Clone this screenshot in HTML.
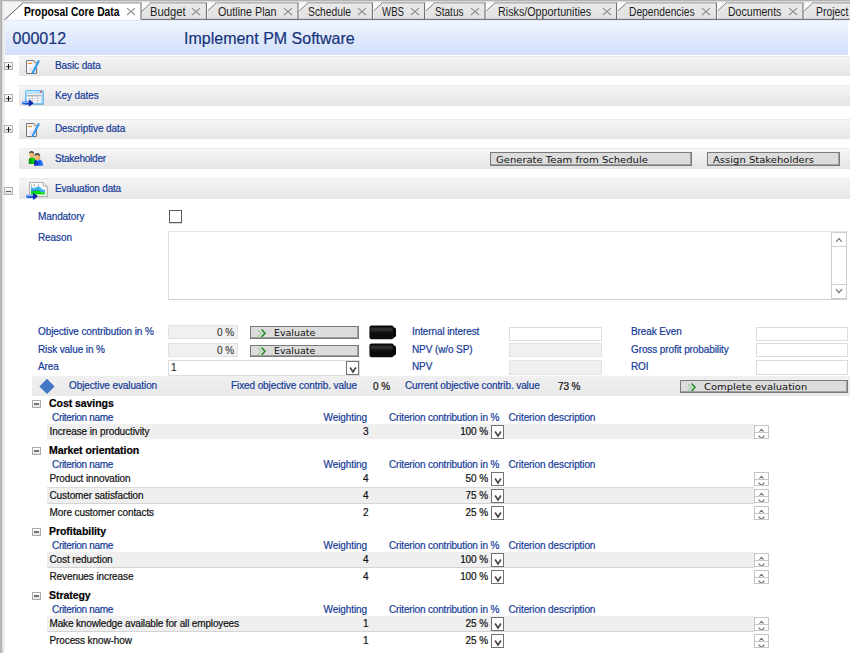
<!DOCTYPE html><html><head><meta charset="utf-8"><title>Proposal Core Data</title><style>
html,body{margin:0;padding:0}
body{width:850px;height:653px;overflow:hidden;background:#fff;position:relative;font-family:"Liberation Sans",sans-serif;font-size:10px;letter-spacing:-0.1px;color:#000;-webkit-text-stroke:0.2px}
.a{position:absolute;white-space:nowrap}
.lb{color:#153b98}
.t{position:absolute;white-space:nowrap;line-height:14px;height:14px}
.k{color:#111}
.sec{position:absolute;left:19px;width:831px;background:linear-gradient(#f5f5f5,#e5e5e5);border-top:1px solid #ebebeb;box-sizing:border-box}
.pm{position:absolute;left:4px;width:9px;height:8px;box-sizing:border-box;border:1px solid #b2b2b2;background:linear-gradient(#fff,#dedede)}
.pm i{position:absolute;left:1px;top:2.5px;width:5px;height:1px;background:#5a5a5a}
.pm b{position:absolute;left:3px;top:0.5px;width:1px;height:5px;background:#111}
.tabt{position:absolute;top:4px;line-height:16px;font-size:12px;letter-spacing:0;-webkit-text-stroke:0;white-space:nowrap;color:#1e1e1e}
.inp{position:absolute;box-sizing:border-box;border:1px solid #dcdcdc;background:#fff}
.ro{background:#f0f0f0;border-color:#e2e2e2}
.btn{position:absolute;box-sizing:border-box;border:1px solid #7a7a7a;background:#dcdcdc;font-family:"DejaVu Sans","Liberation Sans",sans-serif;font-size:8.6px;letter-spacing:0;-webkit-text-stroke:0;line-height:12px;white-space:nowrap;color:#111;box-shadow:inset -1px -1px 0 #a0a0a0}
.row{position:absolute;left:47px;width:707px;height:15px;background:#efefef}
.hl{position:absolute;left:47px;width:707px;height:1px;background:#dcdcdc}
.dd{position:absolute;width:13px;height:13px;box-sizing:border-box;border:1px solid #9a9a9a;background:#fff}
.sp{position:absolute;width:15px;height:14px;box-sizing:border-box;border:1px solid #c6c6c6;background:#fff;overflow:hidden}
</style></head><body>
<div class="a" style="left:0;top:0;width:850px;height:20px;background:#f3f3f3"></div>
<div class="a" style="left:0;top:0;width:850px;height:1px;background:#b2b2b2"></div>
<div class="a" style="left:0;top:1px;width:850px;height:1px;background:#dcdcdc"></div>
<div class="a" style="left:0;top:0;width:2px;height:653px;background:linear-gradient(90deg,#bcbcbc,#adadad)"></div>
<div class="a" style="left:2px;top:1px;width:3px;height:652px;background:linear-gradient(90deg,#dcdcdc,#f6f6f6)"></div>
<svg class="a" style="left:0;top:0" width="850" height="21" viewBox="0 0 850 21"><defs><linearGradient id="tg" x1="0" y1="0" x2="0" y2="1"><stop offset="0" stop-color="#e9e9e9"/><stop offset="1" stop-color="#e2e2e2"/></linearGradient></defs><path d="M803 3.6 L812.0 3.6 L803 11.83Z" fill="#fcfcfc"/><path d="M794.5 19 L812.0 3.2 L900 3.2 L900 19Z" fill="url(#tg)"/><rect x="812.0" y="2" width="38.0" height="1" fill="#b3b3b3"/><rect x="813.0" y="3" width="38.0" height="1" fill="#cbcbcb"/><rect x="900.5" y="10" width="0.9" height="9" fill="#f4f4f4"/><path d="M900 3 L900 19.5" fill="none" stroke="#686868"/><path d="M794.5 19.5 L812.6 3.3" fill="none" stroke="#6a6a6a" stroke-width="0.8"/><path d="M716.4 3.6 L725.4 3.6 L716.4 11.83Z" fill="#fcfcfc"/><path d="M707.9 19 L725.4 3.2 L803 3.2 L803 19Z" fill="url(#tg)"/><rect x="725.4" y="2" width="78.10000000000002" height="1" fill="#b3b3b3"/><rect x="726.4" y="3" width="77.10000000000002" height="1" fill="#cbcbcb"/><rect x="803.5" y="10" width="0.9" height="9" fill="#f4f4f4"/><path d="M803 3 L803 19.5" fill="none" stroke="#686868"/><path d="M707.9 19.5 L726.0 3.3" fill="none" stroke="#6a6a6a" stroke-width="0.8"/><path d="M616.6 3.6 L625.6 3.6 L616.6 11.83Z" fill="#fcfcfc"/><path d="M608.1 19 L625.6 3.2 L716.4 3.2 L716.4 19Z" fill="url(#tg)"/><rect x="625.6" y="2" width="91.29999999999995" height="1" fill="#b3b3b3"/><rect x="626.6" y="3" width="90.29999999999995" height="1" fill="#cbcbcb"/><rect x="716.9" y="10" width="0.9" height="9" fill="#f4f4f4"/><path d="M716.4 3 L716.4 19.5" fill="none" stroke="#686868"/><path d="M608.1 19.5 L626.2 3.3" fill="none" stroke="#6a6a6a" stroke-width="0.8"/><path d="M485 3.6 L494.0 3.6 L485 11.83Z" fill="#fcfcfc"/><path d="M476.5 19 L494.0 3.2 L616.6 3.2 L616.6 19Z" fill="url(#tg)"/><rect x="494.0" y="2" width="123.10000000000002" height="1" fill="#b3b3b3"/><rect x="495.0" y="3" width="122.10000000000002" height="1" fill="#cbcbcb"/><rect x="617.1" y="10" width="0.9" height="9" fill="#f4f4f4"/><path d="M616.6 3 L616.6 19.5" fill="none" stroke="#686868"/><path d="M476.5 19.5 L494.6 3.3" fill="none" stroke="#6a6a6a" stroke-width="0.8"/><path d="M424.6 3.6 L433.6 3.6 L424.6 11.83Z" fill="#fcfcfc"/><path d="M416.1 19 L433.6 3.2 L485 3.2 L485 19Z" fill="url(#tg)"/><rect x="433.6" y="2" width="51.89999999999998" height="1" fill="#b3b3b3"/><rect x="434.6" y="3" width="50.89999999999998" height="1" fill="#cbcbcb"/><rect x="485.5" y="10" width="0.9" height="9" fill="#f4f4f4"/><path d="M485 3 L485 19.5" fill="none" stroke="#686868"/><path d="M416.1 19.5 L434.20000000000005 3.3" fill="none" stroke="#6a6a6a" stroke-width="0.8"/><path d="M372.4 3.6 L381.4 3.6 L372.4 11.83Z" fill="#fcfcfc"/><path d="M363.9 19 L381.4 3.2 L424.6 3.2 L424.6 19Z" fill="url(#tg)"/><rect x="381.4" y="2" width="43.700000000000045" height="1" fill="#b3b3b3"/><rect x="382.4" y="3" width="42.700000000000045" height="1" fill="#cbcbcb"/><rect x="425.1" y="10" width="0.9" height="9" fill="#f4f4f4"/><path d="M424.6 3 L424.6 19.5" fill="none" stroke="#686868"/><path d="M363.9 19.5 L382.0 3.3" fill="none" stroke="#6a6a6a" stroke-width="0.8"/><path d="M298 3.6 L307.0 3.6 L298 11.83Z" fill="#fcfcfc"/><path d="M289.5 19 L307.0 3.2 L372.4 3.2 L372.4 19Z" fill="url(#tg)"/><rect x="307.0" y="2" width="65.89999999999998" height="1" fill="#b3b3b3"/><rect x="308.0" y="3" width="64.89999999999998" height="1" fill="#cbcbcb"/><rect x="372.9" y="10" width="0.9" height="9" fill="#f4f4f4"/><path d="M372.4 3 L372.4 19.5" fill="none" stroke="#686868"/><path d="M289.5 19.5 L307.6 3.3" fill="none" stroke="#6a6a6a" stroke-width="0.8"/><path d="M206.4 3.6 L215.4 3.6 L206.4 11.83Z" fill="#fcfcfc"/><path d="M197.9 19 L215.4 3.2 L298 3.2 L298 19Z" fill="url(#tg)"/><rect x="215.4" y="2" width="83.1" height="1" fill="#b3b3b3"/><rect x="216.4" y="3" width="82.1" height="1" fill="#cbcbcb"/><rect x="298.5" y="10" width="0.9" height="9" fill="#f4f4f4"/><path d="M298 3 L298 19.5" fill="none" stroke="#686868"/><path d="M197.9 19.5 L216.0 3.3" fill="none" stroke="#6a6a6a" stroke-width="0.8"/><path d="M141 3.6 L150.0 3.6 L141 11.83Z" fill="#fcfcfc"/><path d="M132.5 19 L150.0 3.2 L206.4 3.2 L206.4 19Z" fill="url(#tg)"/><rect x="150.0" y="2" width="56.900000000000006" height="1" fill="#b3b3b3"/><rect x="151.0" y="3" width="55.900000000000006" height="1" fill="#cbcbcb"/><rect x="206.9" y="10" width="0.9" height="9" fill="#f4f4f4"/><path d="M206.4 3 L206.4 19.5" fill="none" stroke="#686868"/><path d="M132.5 19.5 L150.6 3.3" fill="none" stroke="#6a6a6a" stroke-width="0.8"/><path d="M4.5 20.5 L22.0 3.2 L141 3.2 L141 20.5Z" fill="#fff"/><rect x="22.0" y="2" width="119.5" height="1" fill="#b3b3b3"/><rect x="23.0" y="3" width="118.5" height="1" fill="#d4d4d4"/><path d="M141 3 L141 19.8" fill="none" stroke="#686868"/><path d="M4.5 19.8 L22.6 3.3" fill="none" stroke="#4a4a4a" stroke-width="0.9"/><rect x="141.5" y="18.85" width="709" height="1" fill="#626262"/></svg>
<div class="tabt" style="left:24px;transform:scaleX(0.8575);transform-origin:0 0;font-weight:bold;color:#000;">Proposal Core Data</div>
<svg class="a" style="left:126px;top:7px" width="10" height="9" viewBox="0 0 10 9"><path d="M1 1.2 L9 8 M9 1.2 L1 8" stroke="#8e8e8e" stroke-width="1.1" fill="none"/></svg>
<div class="tabt" style="left:150px;transform:scaleX(0.9331);transform-origin:0 0;">Budget</div>
<svg class="a" style="left:191.4px;top:7px" width="10" height="9" viewBox="0 0 10 9"><path d="M1 1.2 L9 8 M9 1.2 L1 8" stroke="#8e8e8e" stroke-width="1.1" fill="none"/></svg>
<div class="tabt" style="left:218px;transform:scaleX(0.8948);transform-origin:0 0;">Outline Plan</div>
<svg class="a" style="left:283px;top:7px" width="10" height="9" viewBox="0 0 10 9"><path d="M1 1.2 L9 8 M9 1.2 L1 8" stroke="#8e8e8e" stroke-width="1.1" fill="none"/></svg>
<div class="tabt" style="left:308px;transform:scaleX(0.8592);transform-origin:0 0;">Schedule</div>
<svg class="a" style="left:357.4px;top:7px" width="10" height="9" viewBox="0 0 10 9"><path d="M1 1.2 L9 8 M9 1.2 L1 8" stroke="#8e8e8e" stroke-width="1.1" fill="none"/></svg>
<div class="tabt" style="left:382.4px;transform:scaleX(0.8082);transform-origin:0 0;">WBS</div>
<svg class="a" style="left:409.6px;top:7px" width="10" height="9" viewBox="0 0 10 9"><path d="M1 1.2 L9 8 M9 1.2 L1 8" stroke="#8e8e8e" stroke-width="1.1" fill="none"/></svg>
<div class="tabt" style="left:435px;transform:scaleX(0.8375);transform-origin:0 0;">Status</div>
<svg class="a" style="left:470px;top:7px" width="10" height="9" viewBox="0 0 10 9"><path d="M1 1.2 L9 8 M9 1.2 L1 8" stroke="#8e8e8e" stroke-width="1.1" fill="none"/></svg>
<div class="tabt" style="left:498.4px;transform:scaleX(0.8958);transform-origin:0 0;">Risks/Opportunities</div>
<svg class="a" style="left:601.6px;top:7px" width="10" height="9" viewBox="0 0 10 9"><path d="M1 1.2 L9 8 M9 1.2 L1 8" stroke="#8e8e8e" stroke-width="1.1" fill="none"/></svg>
<div class="tabt" style="left:629px;transform:scaleX(0.8549);transform-origin:0 0;">Dependencies</div>
<svg class="a" style="left:701.4px;top:7px" width="10" height="9" viewBox="0 0 10 9"><path d="M1 1.2 L9 8 M9 1.2 L1 8" stroke="#8e8e8e" stroke-width="1.1" fill="none"/></svg>
<div class="tabt" style="left:727.6px;transform:scaleX(0.8797);transform-origin:0 0;">Documents</div>
<svg class="a" style="left:788px;top:7px" width="10" height="9" viewBox="0 0 10 9"><path d="M1 1.2 L9 8 M9 1.2 L1 8" stroke="#8e8e8e" stroke-width="1.1" fill="none"/></svg>
<div class="tabt" style="left:815.7px;transform:scaleX(0.8646);transform-origin:0 0;">Project</div>
<div class="a" style="left:5px;top:20px;width:843px;height:35px;background:linear-gradient(#f1f5fe,#d1dffc)"></div>
<div class="a" style="left:5px;top:20px;width:843px;height:1px;background:#dfe9fc"></div>
<div class="a" style="left:12.5px;top:29px;font-size:16px;letter-spacing:0.05px;line-height:20px;color:#17357a">000012</div>
<div class="a" style="left:184px;top:29px;font-size:16px;letter-spacing:0;line-height:20px;color:#17357a">Implement PM Software</div>
<div class="sec" style="top:56px;height:20px"></div>
<div class="pm" style="top:62px"><i></i><b></b></div>
<div class="t lb" style="left:55px;top:59px;letter-spacing:-0.1px">Basic data</div>
<div class="sec" style="top:85px;height:21px"></div>
<div class="pm" style="top:94px"><i></i><b></b></div>
<div class="t lb" style="left:55px;top:89px;letter-spacing:-0.1px">Key dates</div>
<div class="sec" style="top:119px;height:20px"></div>
<div class="pm" style="top:125px"><i></i><b></b></div>
<div class="t lb" style="left:55px;top:122px;letter-spacing:-0.1px">Descriptive data</div>
<div class="sec" style="top:148px;height:21px"></div>
<div class="t lb" style="left:55px;top:152px;letter-spacing:-0.23px">Stakeholder</div>
<div class="sec" style="top:178px;height:21px"></div>
<div class="pm" style="top:187px"><i></i></div>
<div class="t lb" style="left:55px;top:182px;letter-spacing:-0.2px">Evaluation data</div>
<svg class="a" style="left:0;top:50px" width="60" height="160" viewBox="0 50 60 160"><defs>
<linearGradient id="docg" x1="0" y1="0" x2="1" y2="1"><stop offset="0" stop-color="#ffffff"/><stop offset="1" stop-color="#e9e9f4"/></linearGradient>
<linearGradient id="arw" x1="0" y1="0" x2="1" y2="0"><stop offset="0" stop-color="#2a6af0"/><stop offset="0.55" stop-color="#1440d0"/><stop offset="1" stop-color="#06107a"/></linearGradient>
<linearGradient id="calh" x1="0" y1="0" x2="0" y2="1"><stop offset="0" stop-color="#c6e8fe"/><stop offset="1" stop-color="#86ccfb"/></linearGradient>
<linearGradient id="grn" x1="0" y1="0" x2="1" y2="0"><stop offset="0" stop-color="#0a8a0a"/><stop offset="0.7" stop-color="#0ccf0c"/><stop offset="1" stop-color="#0aa00a"/></linearGradient>
<linearGradient id="blu" x1="0" y1="0" x2="1" y2="0"><stop offset="0" stop-color="#0a1f9a"/><stop offset="0.45" stop-color="#0f49e6"/><stop offset="1" stop-color="#3f8ef6"/></linearGradient>
<linearGradient id="face" x1="0" y1="0" x2="1" y2="1"><stop offset="0" stop-color="#ffd9a0"/><stop offset="1" stop-color="#f09a40"/></linearGradient>
</defs><g transform="translate(26,60)"><path d="M0.5 0.5 H8 L10.5 3 V13.5 H0.5Z" fill="url(#docg)" stroke="#747474"/><path d="M8 0.8 V3 H10.2" fill="none" stroke="#a0a0a0" stroke-width="0.7"/><rect x="1.8" y="2.8" width="4.2" height="1.3" rx="0.4" fill="#f7941d"/><rect x="3" y="8" width="3.2" height="0.8" fill="#d4d4dc"/><rect x="3" y="10.2" width="3.2" height="0.8" fill="#d4d4dc"/><path d="M12.6 1.2 L6.7 12.7" stroke="#2f97e8" stroke-width="2.3" stroke-linecap="round"/><path d="M12.4 1.6 L6.9 12.4" stroke="#7cc4f6" stroke-width="0.8" stroke-dasharray="1 1.1"/></g><g transform="translate(25,90)"><rect x="0.8" y="0.8" width="18.2" height="14.2" fill="#8a8a8a" opacity="0.6"/><rect x="0.5" y="0.5" width="17.6" height="13.6" rx="0.8" fill="url(#calh)" stroke="#62bbf8"/><rect x="2" y="4.3" width="14.4" height="8.6" fill="#ffffff"/><rect x="2" y="5.2" width="14.4" height="1.2" fill="#9c9c9c"/><path d="M7.5 4.5V12.9M12.5 4.5V12.9M2 8.6H16.4M2 11H16.4" stroke="#c4c4c4" stroke-width="0.7"/><rect x="12.3" y="1.3" width="2.2" height="1.2" fill="#c8ccd4"/><rect x="14.8" y="1.2" width="2.2" height="1.4" rx="0.5" fill="#e8353a"/></g><g transform="translate(21.8,98.8)"><path d="M1.2 2.6 H7 V0.3 L11.8 4.2 L7 8.2 V5.8 H1.2 Q0 5.6 0 4.2 Q0 2.8 1.2 2.6Z" fill="url(#arw)"/><path d="M1.2 3.6 H6.5" stroke="#9ad0ff" stroke-width="1" stroke-linecap="round"/></g><g transform="translate(26,123)"><path d="M0.5 0.5 H8 L10.5 3 V13.5 H0.5Z" fill="url(#docg)" stroke="#747474"/><path d="M8 0.8 V3 H10.2" fill="none" stroke="#a0a0a0" stroke-width="0.7"/><rect x="1.8" y="2.8" width="4.2" height="1.3" rx="0.4" fill="#f7941d"/><rect x="3" y="8" width="3.2" height="0.8" fill="#d4d4dc"/><rect x="3" y="10.2" width="3.2" height="0.8" fill="#d4d4dc"/><path d="M12.6 1.2 L6.7 12.7" stroke="#2f97e8" stroke-width="2.3" stroke-linecap="round"/><path d="M12.4 1.6 L6.9 12.4" stroke="#7cc4f6" stroke-width="0.8" stroke-dasharray="1 1.1"/></g><g><path d="M28.8 164 V160 Q29 157.2 32 157.2 Q35.4 157.2 35.4 160 V164Z" fill="url(#grn)"/><ellipse cx="31.6" cy="154.4" rx="2.5" ry="3.1" fill="url(#face)"/><path d="M29 154 Q28.9 151 31.6 151 Q34.3 151 34.3 154.6 Q33.6 152.6 31.6 152.7 Q29.8 152.7 29 154Z" fill="#4a4a4a"/><path d="M34.2 165.8 V162 Q34.6 159.2 38.4 159.2 Q43.2 159.6 43.3 165.8Z" fill="url(#blu)"/><path d="M36 159.6 L37.6 161.6 L39.6 159.6Z" fill="#6ab4fa"/><ellipse cx="37.3" cy="156.8" rx="2.8" ry="3.4" fill="url(#face)"/><path d="M34.4 156.6 Q34.3 153 37.3 153 Q40.3 153 40.2 157 Q39.4 154.9 37.3 155 Q35.4 155 34.4 156.6Z" fill="#4a4a4a"/></g><g transform="translate(29,182)"><path d="M1 1 H14.5 L19 5 V15.2 H1Z" fill="#9a9a9a" opacity="0.55"/><path d="M0.5 0.5 H14 L18.2 4.2 V14.4 H0.5Z" fill="#fbfbfb" stroke="#b0b0b0"/><path d="M14 0.5 V4.2 H18.2" fill="#e4e4e4" stroke="#b0b0b0" stroke-width="0.8"/><path d="M2.3 2.5V5M5.3 2.2V4.6M9.5 2.4V4.4" stroke="#777" stroke-width="0.6"/><path d="M2 5 L3.5 5.6 L5.5 6.2 L7.5 5 L9.5 4.2 L11.5 5.5 L13.5 7.2 L16 8 V10 H2Z" fill="#3fb4f2"/><path d="M2 8.2 L5 8.4 L8 7.6 L10 8 L12 9.6 L14 10 L16 9.4 V10.4 L13 10.6 L10 8.8 L8 8.4 L5 9.2 L2 9Z" fill="#2a6cc8"/><path d="M2 9 L5 9.2 L8 8.4 L10 8.8 L13 10.6 L16 10.4 V12.6 H2Z" fill="#08de08"/></g><g transform="translate(26.1,192.1)"><path d="M1.2 2.6 H7 V0.3 L11.8 4.2 L7 8.2 V5.8 H1.2 Q0 5.6 0 4.2 Q0 2.8 1.2 2.6Z" fill="url(#arw)"/><path d="M1.2 3.6 H6.5" stroke="#9ad0ff" stroke-width="1" stroke-linecap="round"/></g></svg>
<div class="btn" style="left:490px;top:152px;width:202px;height:14px"><span class="a" style="left:4.5px;top:0.5px;transform:scaleX(1.163);transform-origin:0 0">Generate Team from Schedule</span></div>
<div class="btn" style="left:707px;top:152px;width:133px;height:14px"><span class="a" style="left:4.5px;top:0.5px;transform:scaleX(1.165);transform-origin:0 0">Assign Stakeholders</span></div>
<div class="t lb" style="left:38px;top:210px;">Mandatory</div>
<div class="a" style="left:169px;top:210px;width:13px;height:13px;box-sizing:border-box;border:1px solid #5c5c5c;background:#fff;box-shadow:0 1px 0 #d8d8d8"></div>
<div class="t lb" style="left:38px;top:231px;">Reason</div>
<div class="inp" style="left:168px;top:231px;width:679px;height:69px;border-color:#e4e4e4 #dcdcdc #cfcfcf #dcdcdc"></div>
<div class="a" style="left:831px;top:232px;width:16px;height:67px;box-sizing:border-box;border:1px solid #cfcfcf;background:#fff"></div>
<div class="a" style="left:831px;top:246px;width:16px;height:1px;background:#cfcfcf"></div>
<div class="a" style="left:831px;top:284px;width:16px;height:1px;background:#cfcfcf"></div>
<svg class="a" style="left:831px;top:232px" width="16" height="15"><path d="M5 10 L8 6.6 L11 10" stroke="#6a6a6a" stroke-width="1.1" fill="none"/></svg>
<svg class="a" style="left:831px;top:284px" width="16" height="15"><path d="M5 5.2 L8 8.6 L11 5.2" stroke="#6a6a6a" stroke-width="1.1" fill="none"/></svg>
<div class="t lb" style="left:38px;top:325px;">Objective contribution in %</div>
<div class="t lb" style="left:412px;top:325px;">Internal interest</div>
<div class="t lb" style="left:631px;top:325px;">Break Even</div>
<div class="t lb" style="left:38px;top:343px;">Risk value in %</div>
<div class="t lb" style="left:412px;top:343px;">NPV (w/o SP)</div>
<div class="t lb" style="left:631px;top:343px;">Gross profit probability</div>
<div class="t lb" style="left:38px;top:360px;">Area</div>
<div class="t lb" style="left:412px;top:360px;">NPV</div>
<div class="t lb" style="left:631px;top:360px;">ROI</div>
<div class="inp ro" style="left:168px;top:325px;width:70px;height:14px"></div>
<div class="t k" style="left:114px;width:120px;text-align:right;top:326px;color:#333;-webkit-text-stroke:0.1px">0 %</div>
<div class="btn" style="left:250px;top:326px;width:109px;height:13px"><svg class="a" style="left:5.5px;top:1.5px" width="11" height="9" viewBox="0 0 11 9"><path d="M1 0.8 L4 4.3 L1 7.8" stroke="#9fd09f" stroke-width="1.1" fill="none"/><path d="M4.6 0.5 L8 4.3 L4.6 8.1" stroke="#1d8a1d" stroke-width="1.5" fill="none"/></svg><span class="a" style="left:22.5px;top:0px;transform:scaleX(1.1);transform-origin:0 0">Evaluate</span></div>
<svg class="a" style="left:368px;top:325px" width="30" height="15" viewBox="0 0 30 15"><rect x="23" y="2.6" width="5" height="9.8" rx="1.8" fill="#050505"/><rect x="1.4" y="0.6" width="24.4" height="13.6" rx="2.2" fill="#0b0b0b"/><rect x="2.6" y="2.6" width="22" height="4.6" rx="1" fill="#2d2d2d"/><rect x="2.6" y="6" width="22" height="2.4" fill="#161616"/></svg>
<div class="inp ro" style="left:168px;top:343px;width:70px;height:14px"></div>
<div class="t k" style="left:114px;width:120px;text-align:right;top:344px;color:#333;-webkit-text-stroke:0.1px">0 %</div>
<div class="btn" style="left:250px;top:345px;width:109px;height:12px"><svg class="a" style="left:5.5px;top:0.5px" width="11" height="9" viewBox="0 0 11 9"><path d="M1 0.8 L4 4.3 L1 7.8" stroke="#9fd09f" stroke-width="1.1" fill="none"/><path d="M4.6 0.5 L8 4.3 L4.6 8.1" stroke="#1d8a1d" stroke-width="1.5" fill="none"/></svg><span class="a" style="left:22.5px;top:-1px;transform:scaleX(1.1);transform-origin:0 0">Evaluate</span></div>
<svg class="a" style="left:368px;top:343px" width="30" height="15" viewBox="0 0 30 15"><rect x="23" y="2.6" width="5" height="9.8" rx="1.8" fill="#050505"/><rect x="1.4" y="0.6" width="24.4" height="13.6" rx="2.2" fill="#0b0b0b"/><rect x="2.6" y="2.6" width="22" height="4.6" rx="1" fill="#2d2d2d"/><rect x="2.6" y="6" width="22" height="2.4" fill="#161616"/></svg>
<div class="inp" style="left:168px;top:360px;width:192px;height:16px"></div>
<div class="t k" style="left:171px;top:361px;color:#222;-webkit-text-stroke:0.1px">1</div>
<div class="dd" style="left:346px;top:361px;height:14px;border-color:#727272"></div><svg class="a" style="left:346px;top:361px" width="13" height="14"><path d="M4.1 6.5 L7 10.9 L9.9 6.5" stroke="#484848" stroke-width="1.7" fill="none"/></svg>
<div class="inp" style="left:509px;top:327px;width:93px;height:14px"></div>
<div class="inp ro" style="left:509px;top:343px;width:93px;height:14px"></div>
<div class="inp ro" style="left:509px;top:360px;width:93px;height:15px"></div>
<div class="inp" style="left:756px;top:327px;width:92px;height:14px"></div>
<div class="inp" style="left:756px;top:343px;width:92px;height:14px"></div>
<div class="inp" style="left:756px;top:360px;width:92px;height:15px"></div>
<div class="a" style="left:32px;top:376px;width:818px;height:20px;background:linear-gradient(#f0f0f0,#e9e9e9)"></div>
<svg class="a" style="left:39px;top:378px" width="16" height="17" viewBox="0 0 16 17"><path d="M8 0.8 L15.6 8.4 L8 16 L0.4 8.4 Z" fill="#4177c4"/></svg>
<div class="t lb" style="left:69px;top:379px;">Objective evaluation</div>
<div class="t lb" style="left:231px;top:379px;">Fixed objective contrib. value</div>
<div class="t k" style="left:373px;top:380px;">0 %</div>
<div class="t lb" style="left:405px;top:379px;">Current objective contrib. value</div>
<div class="t k" style="left:558px;top:380px;">73 %</div>
<div class="btn" style="left:680px;top:380px;width:168px;height:13px"><svg class="a" style="left:5.5px;top:1.5px" width="11" height="9" viewBox="0 0 11 9"><path d="M1 0.8 L4 4.3 L1 7.8" stroke="#9fd09f" stroke-width="1.1" fill="none"/><path d="M4.6 0.5 L8 4.3 L4.6 8.1" stroke="#1d8a1d" stroke-width="1.5" fill="none"/></svg><span class="a" style="left:22.5px;top:0px;transform:scaleX(1.155);transform-origin:0 0">Complete evaluation</span></div>
<div class="a" style="left:32px;top:400px;width:9px;height:8px;box-sizing:border-box;border:1px solid #ababab;background:linear-gradient(#fff,#e2e2e2)"><i style="position:absolute;left:1px;top:2.3px;width:5px;height:1.5px;background:#747474"></i></div>
<div class="t k" style="left:49px;top:396px;font-weight:bold;font-size:10.5px;letter-spacing:-0.05px;color:#000">Cost savings</div>
<div class="t lb" style="left:52px;top:411px;letter-spacing:-0.33px">Criterion name</div>
<div class="t lb" style="left:247px;width:120px;text-align:right;top:411px;">Weighting</div>
<div class="t lb" style="left:389px;top:411px;letter-spacing:-0.16px">Criterion contribution in %</div>
<div class="t lb" style="left:508.5px;top:411px;">Criterion description</div>
<div class="row" style="top:424px"></div>
<div class="t k" style="left:49.5px;top:425px;">Increase in productivity</div>
<div class="t k" style="left:248.5px;width:120px;text-align:right;top:425px;">3</div>
<div class="t k" style="left:368px;width:120px;text-align:right;top:425px;">100 %</div>
<div class="dd" style="left:491px;top:425px;height:14px;border-color:#727272"></div><svg class="a" style="left:491px;top:425px" width="13" height="14"><path d="M4.1 6.5 L7 10.9 L9.9 6.5" stroke="#484848" stroke-width="1.7" fill="none"/></svg>
<div class="sp" style="left:754px;top:425px"><svg class="a" style="left:-1px;top:-1px" width="15" height="14"><path d="M0 7.5 H15" stroke="#c6c6c6"/><path d="M5.4 6.6 L7.5 4.4 L9.6 6.6" stroke="#777" stroke-width="1.1" fill="none"/><path d="M4.6 10.6 L7.5 13.6 L10.4 10.6" stroke="#666" stroke-width="1.1" fill="none"/></svg></div>
<div class="a" style="left:32px;top:447px;width:9px;height:8px;box-sizing:border-box;border:1px solid #ababab;background:linear-gradient(#fff,#e2e2e2)"><i style="position:absolute;left:1px;top:2.3px;width:5px;height:1.5px;background:#747474"></i></div>
<div class="t k" style="left:49px;top:443px;font-weight:bold;font-size:10.5px;letter-spacing:-0.05px;color:#000">Market orientation</div>
<div class="t lb" style="left:52px;top:458px;letter-spacing:-0.33px">Criterion name</div>
<div class="t lb" style="left:247px;width:120px;text-align:right;top:458px;">Weighting</div>
<div class="t lb" style="left:389px;top:458px;letter-spacing:-0.16px">Criterion contribution in %</div>
<div class="t lb" style="left:508.5px;top:458px;">Criterion description</div>
<div class="t k" style="left:49.5px;top:472px;">Product innovation</div>
<div class="t k" style="left:248.5px;width:120px;text-align:right;top:472px;">4</div>
<div class="t k" style="left:368px;width:120px;text-align:right;top:472px;">50 %</div>
<div class="dd" style="left:491px;top:472px;height:14px;border-color:#727272"></div><svg class="a" style="left:491px;top:472px" width="13" height="14"><path d="M4.1 6.5 L7 10.9 L9.9 6.5" stroke="#484848" stroke-width="1.7" fill="none"/></svg>
<div class="sp" style="left:754px;top:472px"><svg class="a" style="left:-1px;top:-1px" width="15" height="14"><path d="M0 7.5 H15" stroke="#c6c6c6"/><path d="M5.4 6.6 L7.5 4.4 L9.6 6.6" stroke="#777" stroke-width="1.1" fill="none"/><path d="M4.6 10.6 L7.5 13.6 L10.4 10.6" stroke="#666" stroke-width="1.1" fill="none"/></svg></div>
<div class="row" style="top:488px"></div>
<div class="hl" style="top:487px"></div>
<div class="hl" style="top:503px;background:#d4d4d4"></div>
<div class="t k" style="left:49.5px;top:489px;">Customer satisfaction</div>
<div class="t k" style="left:248.5px;width:120px;text-align:right;top:489px;">4</div>
<div class="t k" style="left:368px;width:120px;text-align:right;top:489px;">75 %</div>
<div class="dd" style="left:491px;top:489px;height:14px;border-color:#727272"></div><svg class="a" style="left:491px;top:489px" width="13" height="14"><path d="M4.1 6.5 L7 10.9 L9.9 6.5" stroke="#484848" stroke-width="1.7" fill="none"/></svg>
<div class="sp" style="left:754px;top:489px"><svg class="a" style="left:-1px;top:-1px" width="15" height="14"><path d="M0 7.5 H15" stroke="#c6c6c6"/><path d="M5.4 6.6 L7.5 4.4 L9.6 6.6" stroke="#777" stroke-width="1.1" fill="none"/><path d="M4.6 10.6 L7.5 13.6 L10.4 10.6" stroke="#666" stroke-width="1.1" fill="none"/></svg></div>
<div class="t k" style="left:49.5px;top:506px;">More customer contacts</div>
<div class="t k" style="left:248.5px;width:120px;text-align:right;top:506px;">2</div>
<div class="t k" style="left:368px;width:120px;text-align:right;top:506px;">25 %</div>
<div class="dd" style="left:491px;top:506px;height:14px;border-color:#727272"></div><svg class="a" style="left:491px;top:506px" width="13" height="14"><path d="M4.1 6.5 L7 10.9 L9.9 6.5" stroke="#484848" stroke-width="1.7" fill="none"/></svg>
<div class="sp" style="left:754px;top:506px"><svg class="a" style="left:-1px;top:-1px" width="15" height="14"><path d="M0 7.5 H15" stroke="#c6c6c6"/><path d="M5.4 6.6 L7.5 4.4 L9.6 6.6" stroke="#777" stroke-width="1.1" fill="none"/><path d="M4.6 10.6 L7.5 13.6 L10.4 10.6" stroke="#666" stroke-width="1.1" fill="none"/></svg></div>
<div class="a" style="left:32px;top:528px;width:9px;height:8px;box-sizing:border-box;border:1px solid #ababab;background:linear-gradient(#fff,#e2e2e2)"><i style="position:absolute;left:1px;top:2.3px;width:5px;height:1.5px;background:#747474"></i></div>
<div class="t k" style="left:49px;top:524px;font-weight:bold;font-size:10.5px;letter-spacing:-0.05px;color:#000">Profitability</div>
<div class="t lb" style="left:52px;top:539px;letter-spacing:-0.33px">Criterion name</div>
<div class="t lb" style="left:247px;width:120px;text-align:right;top:539px;">Weighting</div>
<div class="t lb" style="left:389px;top:539px;letter-spacing:-0.16px">Criterion contribution in %</div>
<div class="t lb" style="left:508.5px;top:539px;">Criterion description</div>
<div class="row" style="top:552px"></div>
<div class="hl" style="top:567px;background:#d4d4d4"></div>
<div class="t k" style="left:49.5px;top:553px;">Cost reduction</div>
<div class="t k" style="left:248.5px;width:120px;text-align:right;top:553px;">4</div>
<div class="t k" style="left:368px;width:120px;text-align:right;top:553px;">100 %</div>
<div class="dd" style="left:491px;top:553px;height:14px;border-color:#727272"></div><svg class="a" style="left:491px;top:553px" width="13" height="14"><path d="M4.1 6.5 L7 10.9 L9.9 6.5" stroke="#484848" stroke-width="1.7" fill="none"/></svg>
<div class="sp" style="left:754px;top:553px"><svg class="a" style="left:-1px;top:-1px" width="15" height="14"><path d="M0 7.5 H15" stroke="#c6c6c6"/><path d="M5.4 6.6 L7.5 4.4 L9.6 6.6" stroke="#777" stroke-width="1.1" fill="none"/><path d="M4.6 10.6 L7.5 13.6 L10.4 10.6" stroke="#666" stroke-width="1.1" fill="none"/></svg></div>
<div class="t k" style="left:49.5px;top:570px;">Revenues increase</div>
<div class="t k" style="left:248.5px;width:120px;text-align:right;top:570px;">4</div>
<div class="t k" style="left:368px;width:120px;text-align:right;top:570px;">100 %</div>
<div class="dd" style="left:491px;top:570px;height:14px;border-color:#727272"></div><svg class="a" style="left:491px;top:570px" width="13" height="14"><path d="M4.1 6.5 L7 10.9 L9.9 6.5" stroke="#484848" stroke-width="1.7" fill="none"/></svg>
<div class="sp" style="left:754px;top:570px"><svg class="a" style="left:-1px;top:-1px" width="15" height="14"><path d="M0 7.5 H15" stroke="#c6c6c6"/><path d="M5.4 6.6 L7.5 4.4 L9.6 6.6" stroke="#777" stroke-width="1.1" fill="none"/><path d="M4.6 10.6 L7.5 13.6 L10.4 10.6" stroke="#666" stroke-width="1.1" fill="none"/></svg></div>
<div class="a" style="left:32px;top:592px;width:9px;height:8px;box-sizing:border-box;border:1px solid #ababab;background:linear-gradient(#fff,#e2e2e2)"><i style="position:absolute;left:1px;top:2.3px;width:5px;height:1.5px;background:#747474"></i></div>
<div class="t k" style="left:49px;top:588px;font-weight:bold;font-size:10.5px;letter-spacing:-0.05px;color:#000">Strategy</div>
<div class="t lb" style="left:52px;top:603px;letter-spacing:-0.33px">Criterion name</div>
<div class="t lb" style="left:247px;width:120px;text-align:right;top:603px;">Weighting</div>
<div class="t lb" style="left:389px;top:603px;letter-spacing:-0.16px">Criterion contribution in %</div>
<div class="t lb" style="left:508.5px;top:603px;">Criterion description</div>
<div class="row" style="top:616px"></div>
<div class="hl" style="top:631px;background:#d4d4d4"></div>
<div class="t k" style="left:49.5px;top:617px;letter-spacing:-0.15px">Make knowledge available for all employees</div>
<div class="t k" style="left:248.5px;width:120px;text-align:right;top:617px;">1</div>
<div class="t k" style="left:368px;width:120px;text-align:right;top:617px;">25 %</div>
<div class="dd" style="left:491px;top:617px;height:14px;border-color:#727272"></div><svg class="a" style="left:491px;top:617px" width="13" height="14"><path d="M4.1 6.5 L7 10.9 L9.9 6.5" stroke="#484848" stroke-width="1.7" fill="none"/></svg>
<div class="sp" style="left:754px;top:617px"><svg class="a" style="left:-1px;top:-1px" width="15" height="14"><path d="M0 7.5 H15" stroke="#c6c6c6"/><path d="M5.4 6.6 L7.5 4.4 L9.6 6.6" stroke="#777" stroke-width="1.1" fill="none"/><path d="M4.6 10.6 L7.5 13.6 L10.4 10.6" stroke="#666" stroke-width="1.1" fill="none"/></svg></div>
<div class="t k" style="left:49.5px;top:634px;">Process know-how</div>
<div class="t k" style="left:248.5px;width:120px;text-align:right;top:634px;">1</div>
<div class="t k" style="left:368px;width:120px;text-align:right;top:634px;">25 %</div>
<div class="dd" style="left:491px;top:634px;height:14px;border-color:#727272"></div><svg class="a" style="left:491px;top:634px" width="13" height="14"><path d="M4.1 6.5 L7 10.9 L9.9 6.5" stroke="#484848" stroke-width="1.7" fill="none"/></svg>
<div class="sp" style="left:754px;top:634px"><svg class="a" style="left:-1px;top:-1px" width="15" height="14"><path d="M0 7.5 H15" stroke="#c6c6c6"/><path d="M5.4 6.6 L7.5 4.4 L9.6 6.6" stroke="#777" stroke-width="1.1" fill="none"/><path d="M4.6 10.6 L7.5 13.6 L10.4 10.6" stroke="#666" stroke-width="1.1" fill="none"/></svg></div>
</body></html>
